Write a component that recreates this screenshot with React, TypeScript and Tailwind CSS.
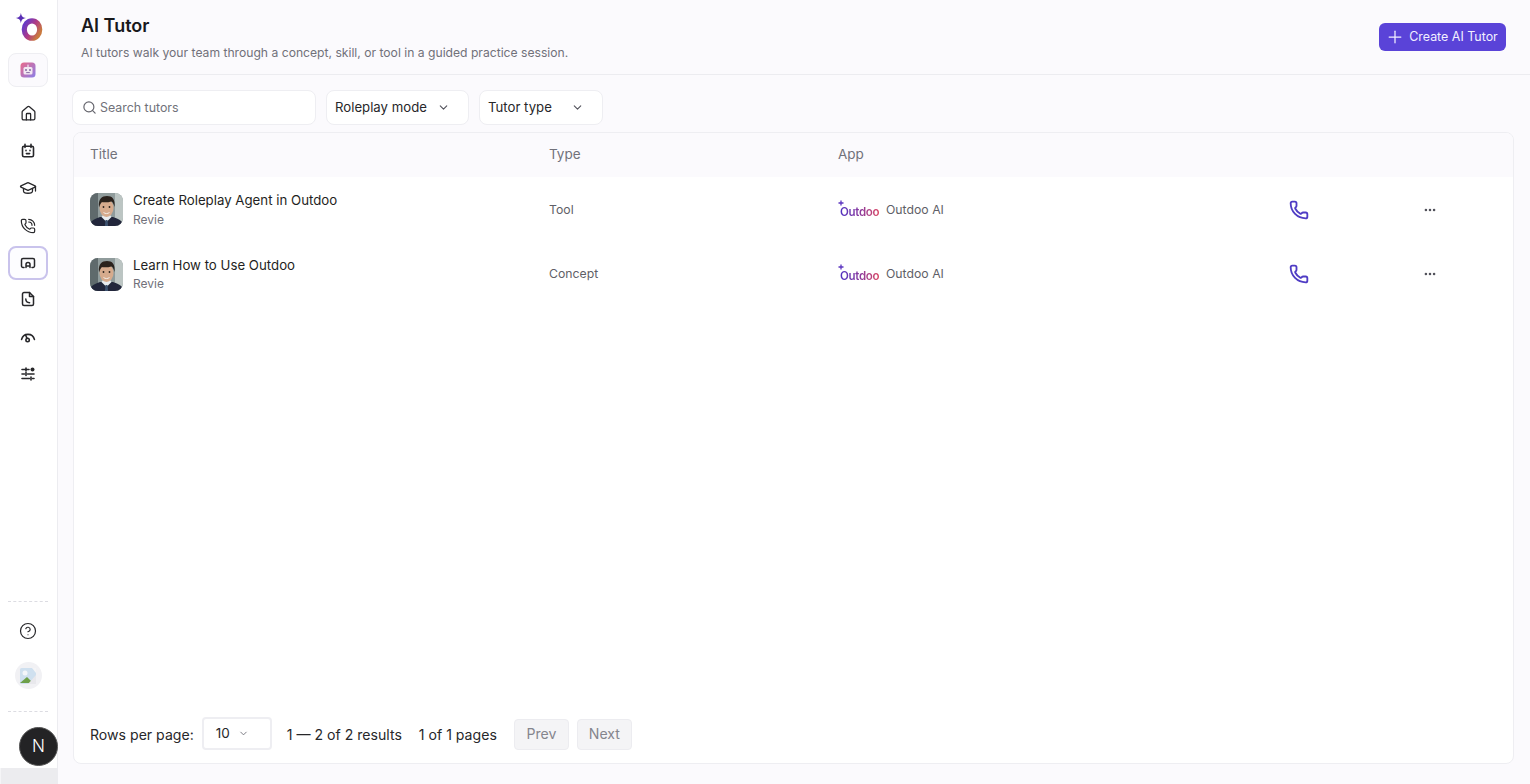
import { Home, GraduationCap, PhoneCall, CircleHelp, Search, ChevronDown, Plus, Phone, Ellipsis } from "lucide-react";

function Logo() {
  return (
    <svg width="32" height="32" viewBox="0 0 32 32" fill="none">
      <defs>
        <linearGradient id="lg" x1="0.1" y1="0.1" x2="1" y2="0.7">
          <stop offset="0" stopColor="#6a3ac4" />
          <stop offset="0.5" stopColor="#b03a85" />
          <stop offset="1" stopColor="#c97a3f" />
        </linearGradient>
      </defs>
      <path d="M8.900 2.700 C9.500 6.200 10.400 7.300 14 8 C10.400 8.700 9.500 9.800 8.900 13.300 C8.300 9.800 7.400 8.700 3.700 8 C7.400 7.300 8.300 6.200 8.900 2.700Z" fill="#5a2fb5" />
      <ellipse cx="20" cy="19.500" rx="7.700" ry="8.700" stroke="url(#lg)" strokeWidth="5.200" />
    </svg>
  );
}

function RobotBadge() {
  return (
    <svg width="16" height="16" viewBox="0 0 16 16">
      <defs>
        <linearGradient id="rb" x1="0" y1="0" x2="1" y2="1">
          <stop offset="0" stopColor="#ea6a8a" />
          <stop offset="1" stopColor="#8a7fe8" />
        </linearGradient>
      </defs>
      <rect x="0.5" y="0.5" width="15" height="15" rx="3.5" fill="url(#rb)" />
      <rect x="3.5" y="5" width="9" height="7.5" rx="1.5" fill="#f3e8f2" />
      <rect x="7.4" y="2.6" width="1.2" height="2.4" fill="#f3e8f2" />
      <circle cx="6" cy="8" r="0.9" fill="#7a5f9a" />
      <circle cx="10" cy="8" r="0.9" fill="#7a5f9a" />
      <rect x="6.2" y="10.2" width="3.6" height="0.9" fill="#7a5f9a" />
    </svg>
  );
}

function CalBot() {
  return (
    <svg width="16" height="16" viewBox="0 0 16 16" fill="none" stroke="#27272a" strokeWidth="1.6" strokeLinecap="round">
      <rect x="2.5" y="3.200" width="11" height="10.600" rx="1.600" />
      <path d="M5 1.400v3M11 1.400v3" />
      <path d="M6 7.400v.4M10 7.400v.4M6.400 10.600h3.200" />
    </svg>
  );
}

function TutorIcon() {
  return (
    <svg width="16" height="16" viewBox="0 0 16 16" fill="none" stroke="#27272a" strokeWidth="1.5" strokeLinecap="round">
      <path d="M4 12.500H3a1.500 1.500 0 0 1-1.500-1.500V5A1.500 1.500 0 0 1 3 3.500h10A1.500 1.500 0 0 1 14.500 5v6a1.500 1.500 0 0 1-1.500 1.500h-1" />
      <path d="M6 12.500V9.500a2 2 0 0 1 4 0v3M6 11h4" />
    </svg>
  );
}

function Gauge() {
  return (
    <svg width="16" height="16" viewBox="0 0 16 16" fill="none" stroke="#27272a" strokeWidth="1.600" strokeLinecap="round">
      <path d="M1.600 10.400A6.600 6.600 0 0 1 14.400 10.400" />
      <circle cx="7.600" cy="11" r="1.700" />
      <path d="M7 9.400 5.600 6" />
    </svg>
  );
}

function FilePhone() {
  return (
    <svg width="16" height="16" viewBox="0 0 16 16" fill="none" stroke="#27272a" strokeWidth="1.500" strokeLinecap="round" strokeLinejoin="round">
      <path d="M9.500 1.500H4A1.500 1.500 0 0 0 2.500 3v10A1.500 1.500 0 0 0 4 14.500h8a1.500 1.500 0 0 0 1.500-1.500V5.500Z" />
      <path d="M9.500 1.500v4h4" />
      <path d="M5.800 8c0 2 1.400 3.600 3.800 3.700" />
    </svg>
  );
}

function Tune() {
  return (
    <svg width="16" height="16" viewBox="0 0 16 16" fill="none" stroke="#27272a" strokeWidth="1.600" strokeLinecap="round">
      <path d="M2 3.500h7M2 8h2.500M7.500 8H14M2 12.500h7.500M12.500 12.500H14" />
      <path d="M6 2v3M6 6.500v3M11 11v3" />
      <circle cx="12.500" cy="3.500" r="2" fill="#27272a" stroke="none" />
    </svg>
  );
}

function Avatar() {
  return (
    <div className="h-[33px] w-[33px] shrink-0 overflow-hidden rounded-lg">
      <svg width="33" height="33" viewBox="0 0 33 33">
        <defs>
          <filter id="soft"><feGaussianBlur stdDeviation="0.4" /></filter>
        </defs>
        <rect width="33" height="33" fill="#909c9c" />
        <rect x="0" y="0" width="8" height="33" fill="#5f6a6c" />
        <rect x="25" y="0" width="8" height="33" fill="#bcc5c3" />
        <g filter="url(#soft)">
          <path d="M0 33v-3c2-3 7-5 10-6h13c3 1 8 3 10 6v3Z" fill="#20283a" />
          <path d="M11.500 24l5 5 5-5-1.500-2h-7Z" fill="#e8ecef" />
          <path d="M15.500 27h2l.6 6h-3.200Z" fill="#3e5270" />
          <ellipse cx="16.500" cy="15" rx="7" ry="9" fill="#d6ab8d" />
          <path d="M9 14C8 6 12 3 17 3s8.500 3 7.500 11c-.8-3-1.500-4.500-3-5.500-3 1-8 1-9.500 .5-1.500 1-2 3-3 5.500Z" fill="#2a211c" />
          <circle cx="13.500" cy="14" r="0.900" fill="#2a211c" />
          <circle cx="19.500" cy="14" r="0.900" fill="#2a211c" />
          <path d="M13.500 19.500c2 1.400 4 1.400 6 0" stroke="#f5eee8" strokeWidth="1" fill="none" />
        </g>
      </svg>
    </div>
  );
}

function Row({ title, type }: { title: string; type: string }) {
  return (
    <div className="grid h-[64.500px] shrink-0 grid-cols-[459px_289px_450.500px_134px_1fr] items-center pt-[1px] pl-[16px]">
      <div className="flex items-center gap-[10px]">
        <Avatar />
        <div className="flex flex-col">
          <span className="text-[13.250px] leading-[18.500px] text-[#1f1f23]">{title}</span>
          <span className="pt-[1px] text-[12px] leading-[18px] text-[#71717a]">Revie</span>
        </div>
      </div>
      <span className="text-[12.250px] text-[#5f5f67]">{type}</span>
      <div className="flex items-center gap-[7px]">
        <span className="relative mt-[2px] w-[41px] pl-[2px] leading-[14px]">
          <svg className="absolute -top-[3px] left-0" width="6" height="6" viewBox="0 0 6 6">
            <path d="M3 0.500v5M0.500 3h5" stroke="#5b34c0" strokeWidth="1.300" />
          </svg>
          <span className="bg-gradient-to-r from-[#4f2fc0] via-[#8a3aa0] to-[#d9405f] bg-clip-text text-[11.500px] font-semibold tracking-[-0.3px] text-transparent">
            Outdoo
          </span>
        </span>
        <span className="text-[12.250px] text-[#5f5f67]">Outdoo AI</span>
      </div>
      <Phone size={20} strokeWidth={2.200} className="text-[#4f3cc4]" />
      <Ellipsis size={14} strokeWidth={2.400} className="text-[#52525b]" />
    </div>
  );
}

export default function App() {
  return (
    <div className="relative flex h-[784px] w-[1530px] overflow-hidden bg-[#fbfafd] font-['Inter',sans-serif]">
      <aside className="flex w-[58px] shrink-0 flex-col items-center border-r border-[#ececf0] bg-white pr-[1px]">
        <div className="mt-[10px]"><Logo /></div>
        <div className="mt-[11px] flex h-[34px] w-[40px] items-center justify-center rounded-lg border border-[#eeeef2] bg-[#fbfafd]"><RobotBadge /></div>
        <nav className="mt-[7.500px] flex flex-col items-center">
          <div className="flex h-[37.500px] w-10 items-center justify-center"><Home size={17} strokeWidth={1.800} className="text-[#27272a]" /></div>
          <div className="flex h-[37.500px] w-10 items-center justify-center"><CalBot /></div>
          <div className="flex h-[37.500px] w-10 items-center justify-center"><GraduationCap size={18} strokeWidth={1.700} className="text-[#27272a]" /></div>
          <div className="flex h-[37.500px] w-10 items-center justify-center"><PhoneCall size={16} strokeWidth={1.800} className="text-[#27272a]" /></div>
          <div className="mt-[1.500px] flex h-[34px] w-10 items-center justify-center rounded-lg border-2 border-[#c9c3ec] bg-[#fdfdff]"><TutorIcon /></div>
          <div className="flex h-[37.500px] w-10 items-center justify-center"><FilePhone /></div>
          <div className="flex h-[37.500px] w-10 items-center justify-center pt-[1px]"><Gauge /></div>
          <div className="flex h-[37.500px] w-10 items-center justify-center"><Tune /></div>
        </nav>
        <div className="mt-auto w-10 border-t border-dashed border-[#dcdce2]" />
        <CircleHelp size={18} strokeWidth={1.600} className="mt-[20px] text-[#27272a]" />
        <div className="mt-[22px] flex h-[27px] w-[27px] items-center justify-center overflow-hidden rounded-full bg-[#f1f1f4]">
          <svg width="18" height="18" viewBox="0 0 18 18">
            <rect x="1" y="1" width="16" height="16" rx="1.500" fill="#cfe0ef" />
            <circle cx="6" cy="6" r="2.500" fill="#f4f6fa" />
            <path d="M1 16 L8 10 L14 16Z" fill="#6ea04a" />
            <path d="M17 1v5l-4-5Z" fill="#f4f4f6" />
            <path d="M9 17L17 8v9Z" fill="#e8e8ec" />
          </svg>
        </div>
        <div className="mt-[22px] w-10 border-t border-dashed border-[#dcdce2]" />
        <div className="mt-[56px] h-[16px] w-[calc(100%+1px)] translate-x-[0.500px] bg-[#ececef]" />
      </aside>
      <div className="absolute top-[727px] left-[19px] flex h-[39px] w-[39px] items-center justify-center rounded-full border border-[#555] bg-[#232325] text-[17px] font-light text-white">N</div>
      <main className="flex min-w-0 flex-1 flex-col">
        <header className="flex h-[75px] shrink-0 items-center justify-between border-b border-[#ececf0] pr-[24px] pl-[23px]">
          <div className="flex flex-col">
            <h1 className="text-[18px] leading-[26px] font-semibold text-[#18181b]">AI Tutor</h1>
            <p className="mt-[5px] text-[12.150px] leading-[18px] text-[#71717a]">AI tutors walk your team through a concept, skill, or tool in a guided practice session.</p>
          </div>
          <button className="flex h-[28px] w-[127px] items-center justify-center gap-[4px] rounded-md bg-[#5a43d8] pr-[2px] text-[12.450px] text-[#f2f0ff]">
            <Plus size={20} strokeWidth={1.500} />
            Create AI Tutor
          </button>
        </header>
        <div className="flex items-center gap-[10px] pt-[15px] pl-[14px]">
          <div className="flex h-[35px] w-[244px] items-center gap-[3px] rounded-lg border border-[#eeeef2] bg-white pl-[9px]">
            <Search size={15} strokeWidth={1.900} className="text-[#66666e]" />
            <span className="pt-[1px] text-[12.400px] text-[#71717a]">Search tutors</span>
          </div>
          <div className="flex h-[35px] w-[143px] items-center gap-[10px] rounded-lg border border-[#eeeef2] bg-white pl-[8px]">
            <span className="text-[13.200px] text-[#27272a]">Roleplay mode</span>
            <ChevronDown size={13} className="text-[#52525b]" />
          </div>
          <div className="flex h-[35px] w-[124px] items-center gap-[19.500px] rounded-lg border border-[#eeeef2] bg-white pl-[8px]">
            <span className="text-[13.200px] text-[#27272a]">Tutor type</span>
            <ChevronDown size={13} className="text-[#52525b]" />
          </div>
        </div>
        <section className="mt-[7px] mr-[16px] mb-[20px] ml-[15px] flex flex-1 flex-col overflow-hidden rounded-lg border border-[#eeeef2] bg-white">
          <div className="grid h-[44px] shrink-0 grid-cols-[459px_289px_1fr] items-center bg-[#fbfafd] pb-[2px] pl-[16px] text-[13.500px] text-[#71717a]">
            <span>Title</span>
            <span>Type</span>
            <span>App</span>
          </div>
          <Row title="Create Roleplay Agent in Outdoo" type="Tool" />
          <Row title="Learn How to Use Outdoo" type="Concept" />
          <div className="mt-auto flex h-[58px] items-center pl-[16px] text-[14.100px] text-[#27272a]">
            <span className="mt-[2px]">Rows per page:</span>
            <div className="ml-[8px] -mt-[2px] flex h-[33px] w-[70px] items-center gap-[8px] rounded-[4px] border-2 border-[#eeeef2] pl-[12px] text-[13.500px]">
              10 <ChevronDown size={11} className="text-[#71717a]" />
            </div>
            <span className="mt-[2px] ml-[15px]">1 — 2 of 2 results</span>
            <span className="mt-[2px] ml-[17px]">1 of 1 pages</span>
            <div className="ml-[17px] flex h-[31px] w-[55px] items-center justify-center rounded-sm border border-[#ececf0] bg-[#f4f4f6] text-[#85858d]">Prev</div>
            <div className="ml-[8px] flex h-[31px] w-[55px] items-center justify-center rounded-sm border border-[#ececf0] bg-[#f4f4f6] text-[#85858d]">Next</div>
          </div>
        </section>
      </main>
    </div>
  );
}
